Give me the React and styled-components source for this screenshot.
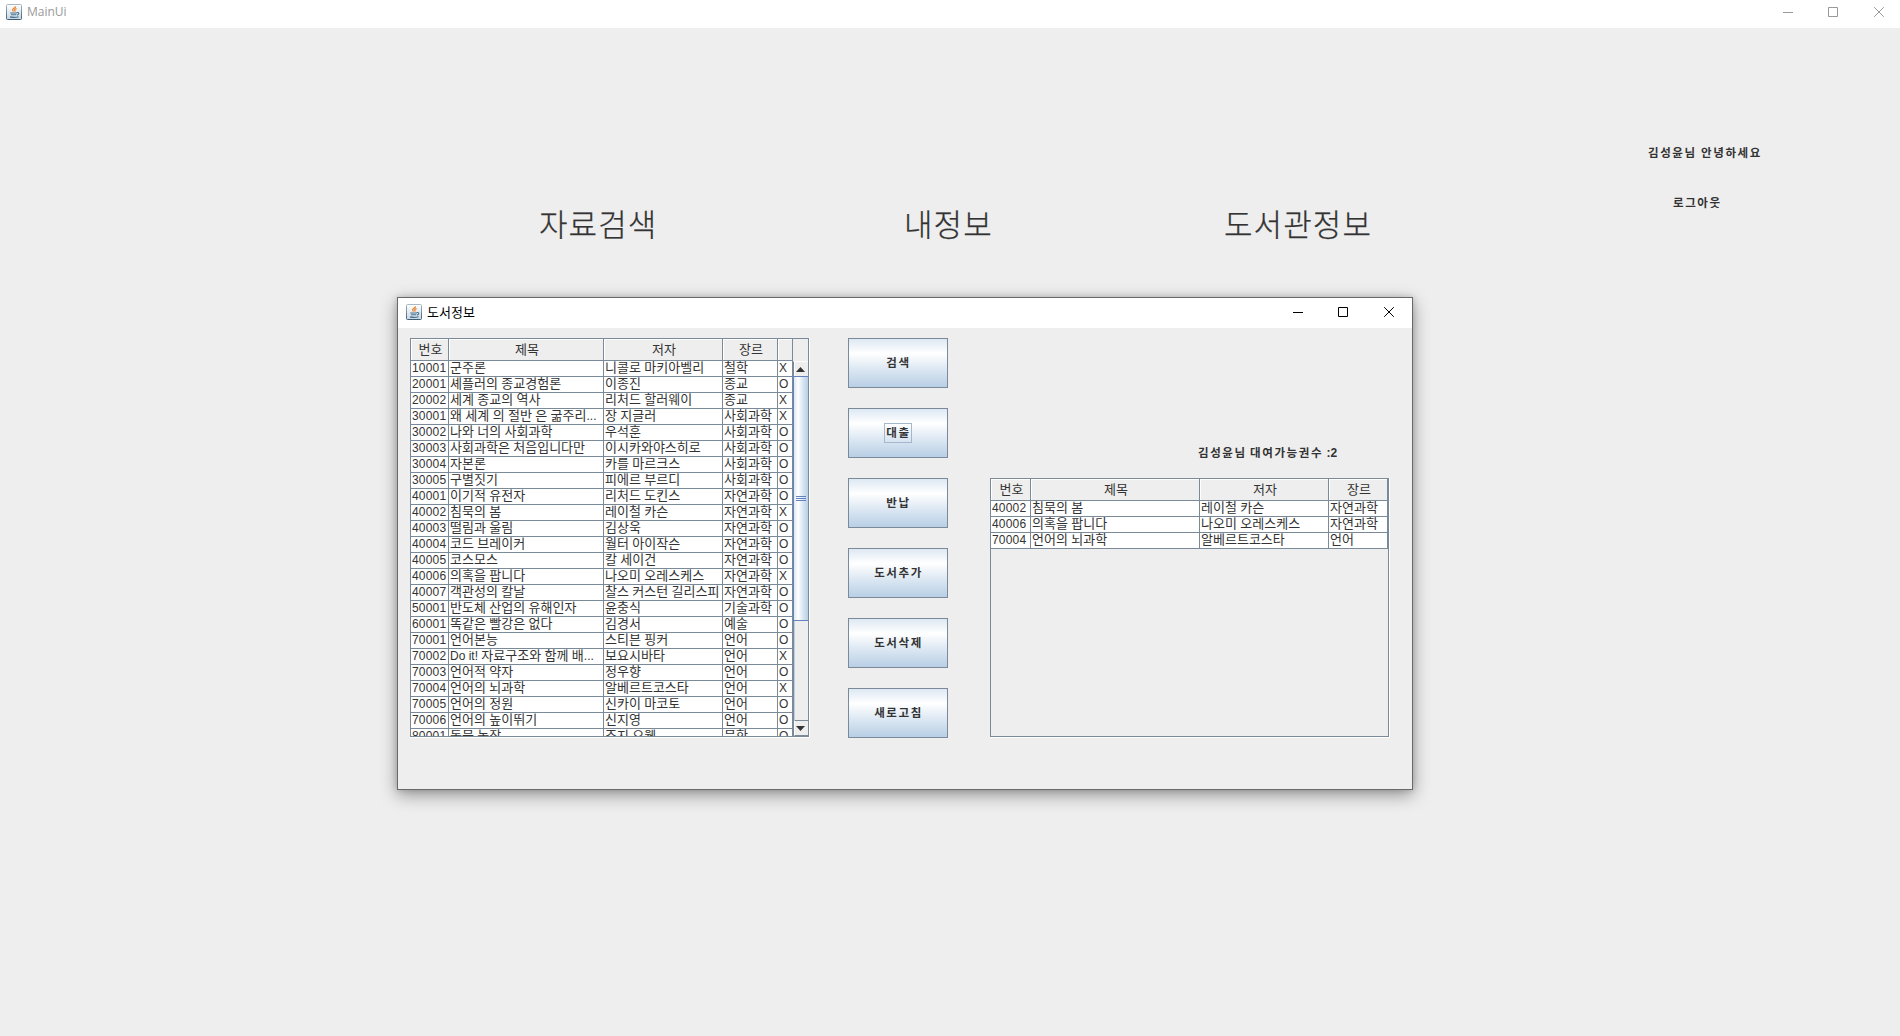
import React from "react";
import styled, { createGlobalStyle, css } from "styled-components";

const LINE = "#7a8a99";
const INK = "#333";

const Global = createGlobalStyle`
  * { box-sizing: border-box; }
  body {
    margin: 0;
    background: #eee;
    font-family: "Liberation Sans", "Noto Sans CJK KR", sans-serif;
    font-size: 12px;
    color: ${INK};
    overflow: hidden;
  }
`;

const Screen = styled.div`
  position: relative;
  width: 1900px;
  height: 1036px;
  background: #eee;
`;

const TitleBar = styled.header`
  display: flex;
  align-items: center;
  height: ${(p) => (p.$main ? 28 : 30)}px;
  padding: ${(p) => (p.$main ? "0 0 4px 6px" : "0 0 2px 8px")};
  background: #fff;
  color: ${(p) => (p.$main ? "#999" : "#000")};
`;

const Caption = styled.span`
  flex: 1;
  margin-left: 5px;
  line-height: 16px;
  font-family: "Open Sans", "Noto Sans CJK KR", sans-serif;
  font-size: ${(p) => (p.$korean ? 13 : 12)}px;
`;

const Controls = styled.div`
  display: flex;
  gap: 35px;
  margin-right: ${(p) => (p.$main ? 16 : 18)}px;
`;

const Glyph = styled.svg`
  display: block;
  width: 10px;
  height: 10px;
  fill: none;
  stroke: currentColor;
  &:last-child { margin-left: 1px; }
`;

const Hangul = styled.span`
  font-family: "Noto Sans CJK KR", sans-serif;
  font-size: 1.085em;
  line-height: 0;
`;

const BoldHangul = styled.span`
  font-family: "Noto Sans CJK KR", sans-serif;
  font-size: 11.5px;
  letter-spacing: 1.6px;
  line-height: 0;
`;

const Nav = styled.nav`
  display: flex;
  padding: 175px 0 0 539px;
  font-size: 31px;
  font-weight: 300;
  letter-spacing: 1.1px;
  line-height: 40px;
  font-family: "Noto Sans CJK KR", sans-serif;
  -webkit-text-stroke: 0.25px ${INK};
`;

const NavItem = styled.span`
  width: ${(p) => p.$w}px;
  white-space: nowrap;
`;

const Account = styled.div`
  position: absolute;
  left: 1648px;
  top: 145px;
  display: flex;
  flex-direction: column;
  gap: 34px;
  font-weight: bold;
  line-height: 16px;
  word-spacing: 1px;
`;

const AccountLine = styled.span`
  padding-left: ${(p) => p.$indent || 0}px;
  white-space: nowrap;
`;

const Dialog = styled.section`
  position: absolute;
  left: 397px;
  top: 297px;
  width: 1016px;
  height: 493px;
  border: 1px solid #696969;
  background: #eee;
  box-shadow: 0 5px 16px rgba(0, 0, 0, 0.38), 0 0 6px rgba(0, 0, 0, 0.16);
`;

const DialogBody = styled.div`
  display: flex;
  padding: 10px 0 0 12px;
`;

const ButtonColumn = styled.div`
  display: flex;
  flex-direction: column;
  gap: 20px;
  margin-left: 38px;
`;

const Button = styled.button`
  display: flex;
  align-items: center;
  justify-content: center;
  width: 100px;
  height: 50px;
  padding: 0;
  border: 1px solid ${LINE};
  background: linear-gradient(#dde8f3, #fff 30%, #dde8f3 62%, #b8cfe5);
  color: ${INK};
  font: bold 12px "Liberation Sans", "Noto Sans CJK KR", sans-serif;
`;

const ButtonLabel = styled.span`
  display: flex;
  align-items: center;
  justify-content: center;
  height: 20px;
  min-width: 27px;
  padding: 0 0 3px 1px;
  border: 1px solid ${(p) => (p.$focused ? "#a3b8cc" : "transparent")};
`;

const LoanPanel = styled.div`
  margin-left: 42px;
`;

const LoanSummary = styled.div`
  height: 140px;
  padding: 107px 0 0 208px;
  font-weight: bold;
  line-height: 16px;
  white-space: nowrap;
`;

const ScrollPane = styled.div`
  width: 400px;
  height: ${(p) => p.$h}px;
  border-right: 1px solid #fff;
  border-bottom: 1px solid #fff;
`;

const PaneInner = styled.div`
  display: flex;
  height: 100%;
  border: 1px solid ${LINE};
  overflow: hidden;
`;

const Table = styled.div`
  flex: none;
  width: ${(p) => p.$w}px;
`;

const columns = css`
  display: grid;
  grid-template-columns: ${(p) => p.$cols};
`;

const HeadRow = styled.div`
  ${columns}
  height: 22px;
`;

const HeadCell = styled.div`
  display: flex;
  align-items: center;
  justify-content: center;
  border-right: 1px solid ${LINE};
  border-bottom: 1px solid ${LINE};
  box-shadow: inset 1px 1px #fff;
  padding: 0 0 2px 2px;
`;

const Row = styled.div`
  ${columns}
  height: 16px;
  background: #fff;
`;

const Cell = styled.div`
  border-right: 1px solid ${LINE};
  border-bottom: 1px solid ${LINE};
  padding-left: 1px;
  line-height: 14px;
  height: 16px;
  white-space: nowrap;
  letter-spacing: ${(p) => (p.$number ? 0.2 : 0)}px;
`;

const BarColumn = styled.div`
  display: flex;
  flex-direction: column;
  width: 15px;
  padding-top: 22px;
`;

const ScrollBar = styled.div`
  flex: 1;
  display: flex;
  flex-direction: column;
  border-left: 1px solid ${LINE};
  border-top: 1px solid #fff;
`;

const Arrow = styled.div`
  display: flex;
  align-items: center;
  justify-content: center;
  height: ${(p) => (p.$down ? 16 : 14)}px;
  padding-right: 2px;
  border-left: 1px solid #fff;
  border-top: ${(p) => (p.$down ? `1px solid ${LINE}` : "0")};
  border-bottom: ${(p) => (p.$down ? `1px solid ${LINE}` : "0")};
`;

const Thumb = styled.div`
  display: flex;
  flex-direction: column;
  align-items: center;
  justify-content: center;
  gap: 1px;
  height: 245px;
  margin-left: -1px;
  border: solid #6382bf;
  border-width: 1px 0 1px 1px;
  background: linear-gradient(90deg, #dde8f3, #fff 30%, #dde8f3 60%, #b8cfe5);
`;

const Grip = styled.i`
  width: 10px;
  height: 1px;
  background: #6382bf;
`;

const Track = styled.div`
  flex: 1;
  border-left: 1px solid #b8cfe5;
`;

function Mixed({ bold, children }) {
  const Run = bold ? BoldHangul : Hangul;
  return children
    .split(/([가-힣]+)/)
    .filter(Boolean)
    .map((part, i) => (/[가-힣]/.test(part) ? <Run key={i}>{part}</Run> : part));
}

function JavaIcon() {
  return (
    <svg width="16" height="16" viewBox="0 0 16 16">
      <defs>
        <linearGradient id="tile" x1="0" y1="0" x2="0" y2="1">
          <stop offset="0" stopColor="#fff" />
          <stop offset="1" stopColor="#c9d6e0" />
        </linearGradient>
        <linearGradient id="rim" x1="0" y1="0" x2="0" y2="1">
          <stop offset="0" stopColor="#a9b8c3" />
          <stop offset="1" stopColor="#3f5f78" />
        </linearGradient>
      </defs>
      <rect x=".5" y=".5" width="15" height="15" rx="1" fill="url(#tile)" stroke="url(#rim)" />
      <path d="M9.600 2.300C9.400 4 6.300 4.500 6.600 6c.1.7.9 1 .9 1.600M10.600 4.600C8.800 5 8.200 5.800 8.900 6.700c.2.3.1.6-.2.9" fill="none" stroke="#e8832a" strokeWidth="1.300" />
      <path d="M4.200 9h6.600M5 10.800h5.300M10.800 8.600c2.800-.5 2.500 2 .2 2.500M4 12.900c2.500.6 6 .6 8.600-.2" fill="none" stroke="#47718f" strokeWidth="1.100" />
    </svg>
  );
}

function WindowControls({ main }) {
  return (
    <Controls $main={main}>
      <Glyph viewBox="0 0 10 10"><path d="M0 5.500h10" /></Glyph>
      <Glyph viewBox="0 0 10 10"><path d="M.5.5h9v9h-9z" /></Glyph>
      <Glyph viewBox="0 0 10 10"><path d="M.2.2l9.600 9.600M9.800.2L.2 9.800" /></Glyph>
    </Controls>
  );
}

function DataTable({ cols, width, heads, rows }) {
  return (
    <Table $w={width}>
      <HeadRow $cols={cols}>
        {heads.map((h, i) => <HeadCell key={i}><Mixed>{h}</Mixed></HeadCell>)}
      </HeadRow>
      {rows.map((r) => (
        <Row key={r[0]} $cols={cols}>
          {r.map((c, i) => <Cell key={i} $number={i === 0}><Mixed>{c}</Mixed></Cell>)}
        </Row>
      ))}
    </Table>
  );
}

const books = [
  ["10001", "군주론", "니콜로 마키아벨리", "철학", "X"],
  ["20001", "셰플러의 종교경험론", "이종진", "종교", "O"],
  ["20002", "세계 종교의 역사", "리처드 할러웨이", "종교", "X"],
  ["30001", "왜 세계 의 절반 은 굶주리...", "장 지글러", "사회과학", "X"],
  ["30002", "나와 너의 사회과학", "우석훈", "사회과학", "O"],
  ["30003", "사회과학은 처음입니다만", "이시카와야스히로", "사회과학", "O"],
  ["30004", "자본론", "카를 마르크스", "사회과학", "O"],
  ["30005", "구별짓기", "피에르 부르디", "사회과학", "O"],
  ["40001", "이기적 유전자", "리처드 도킨스", "자연과학", "O"],
  ["40002", "침묵의 봄", "레이철 카슨", "자연과학", "X"],
  ["40003", "떨림과 울림", "김상욱", "자연과학", "O"],
  ["40004", "코드 브레이커", "월터 아이작슨", "자연과학", "O"],
  ["40005", "코스모스", "칼 세이건", "자연과학", "O"],
  ["40006", "의혹을 팝니다", "나오미 오레스케스", "자연과학", "X"],
  ["40007", "객관성의 칼날", "찰스 커스턴 길리스피", "자연과학", "O"],
  ["50001", "반도체 산업의 유해인자", "윤충식", "기술과학", "O"],
  ["60001", "똑같은 빨강은 없다", "김경서", "예술", "O"],
  ["70001", "언어본능", "스티븐 핑커", "언어", "O"],
  ["70002", "Do it! 자료구조와 함께 배...", "보요시바타", "언어", "X"],
  ["70003", "언어적 약자", "정우향", "언어", "O"],
  ["70004", "언어의 뇌과학", "알베르트코스타", "언어", "X"],
  ["70005", "언어의 정원", "신카이 마코토", "언어", "O"],
  ["70006", "언어의 높이뛰기", "신지영", "언어", "O"],
  ["80001", "동물 농장", "조지 오웰", "문학", "O"],
];

const loans = [
  ["40002", "침묵의 봄", "레이철 카슨", "자연과학"],
  ["40006", "의혹을 팝니다", "나오미 오레스케스", "자연과학"],
  ["70004", "언어의 뇌과학", "알베르트코스타", "언어"],
];

const actions = ["검색", "대출", "반납", "도서추가", "도서삭제", "새로고침"];

export default function App() {
  return (
    <Screen>
      <Global />
      <TitleBar $main>
        <JavaIcon />
        <Caption>MainUi</Caption>
        <WindowControls main />
      </TitleBar>
      <Nav>
        <NavItem $w={365}>자료검색</NavItem>
        <NavItem $w={320}>내정보</NavItem>
        <NavItem $w={160}>도서관정보</NavItem>
      </Nav>
      <Account>
        <AccountLine><Mixed bold>김성윤님 안녕하세요</Mixed></AccountLine>
        <AccountLine $indent={25}><Mixed bold>로그아웃</Mixed></AccountLine>
      </Account>
      <Dialog>
        <TitleBar>
          <JavaIcon />
          <Caption $korean>도서정보</Caption>
          <WindowControls />
        </TitleBar>
        <DialogBody>
          <ScrollPane $h={400}>
            <PaneInner>
              <DataTable
                width={382}
                cols="38px 155px 119px 55px 15px"
                heads={["번호", "제목", "저자", "장르", ""]}
                rows={books}
              />
              <BarColumn>
                <ScrollBar>
                  <Arrow>
                    <svg width="9" height="5"><path d="M4.500 0L9 5H0z" fill={INK} /></svg>
                  </Arrow>
                  <Thumb><Grip /><Grip /><Grip /></Thumb>
                  <Track />
                  <Arrow $down>
                    <svg width="9" height="5"><path d="M0 0H9L4.500 5z" fill={INK} /></svg>
                  </Arrow>
                </ScrollBar>
              </BarColumn>
            </PaneInner>
          </ScrollPane>
          <ButtonColumn>
            {actions.map((a) => (
              <Button key={a}>
                <ButtonLabel $focused={a === "대출"}><Mixed bold>{a}</Mixed></ButtonLabel>
              </Button>
            ))}
          </ButtonColumn>
          <LoanPanel>
            <LoanSummary><Mixed bold>김성윤님 대여가능권수 :2</Mixed></LoanSummary>
            <ScrollPane $h={260}>
              <PaneInner>
                <DataTable
                  width={397}
                  cols="40px 169px 129px 59px"
                  heads={["번호", "제목", "저자", "장르"]}
                  rows={loans}
                />
              </PaneInner>
            </ScrollPane>
          </LoanPanel>
        </DialogBody>
      </Dialog>
    </Screen>
  );
}
